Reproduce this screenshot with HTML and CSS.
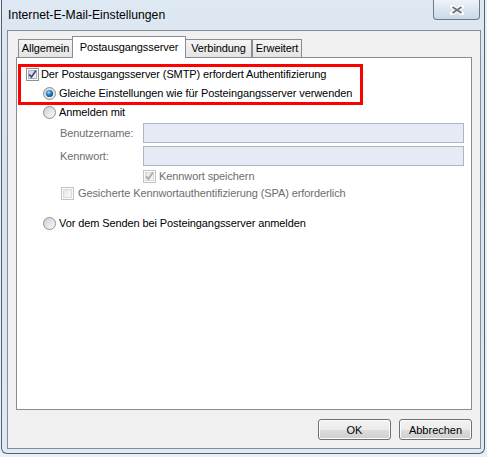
FILE: index.html
```html
<!DOCTYPE html>
<html lang="de">
<head>
    <meta charset="UTF-8">
    <title>Internet-E-Mail-Einstellungen</title>
    <link rel="stylesheet" href="styles.css">
</head>
<body>

    <!-- shared gradients for the checkboxes and radios -->
    <svg class="defs" width="0" height="0">
        <defs>
            <linearGradient id="boxFill" x1="0" y1="0" x2="1" y2="1">
                <stop offset="0" stop-color="#cbd0d6"/>
                <stop offset="1" stop-color="#f8f8f8"/>
            </linearGradient>
            <linearGradient id="boxOff" x1="0" y1="0" x2="1" y2="1">
                <stop offset="0" stop-color="#e6e6e6"/>
                <stop offset="1" stop-color="#f8f8f8"/>
            </linearGradient>
            <linearGradient id="radioFill" x1="0" y1="0" x2="1" y2="1">
                <stop offset="0" stop-color="#c9ced4"/>
                <stop offset="1" stop-color="#fbfbfb"/>
            </linearGradient>
            <radialGradient id="radioDot" cx="0.4" cy="0.35" r="0.7">
                <stop offset="0" stop-color="#9fdcff"/>
                <stop offset="0.45" stop-color="#2b8ad0"/>
                <stop offset="1" stop-color="#0f3f78"/>
            </radialGradient>
        </defs>
    </svg>

    <div class="window">
        <div class="titlebar">
            <span class="title">Internet-E-Mail-Einstellungen</span>
            <div class="close">
                <svg width="14" height="10" viewBox="0 0 14 10">
                    <path d="M2 1.5 L12 8.5 M12 1.5 L2 8.5" stroke="#fff" stroke-width="4" stroke-linecap="round"/>
                    <path d="M2.5 2 L11.5 8 M11.5 2 L2.5 8" stroke="#6f7378" stroke-width="2"/>
                </svg>
            </div>
        </div>

        <div class="dialog">
            <div class="tabs">
                <div class="tab tab-first">Allgemein</div>
                <div class="tab active">Postausgangsserver</div>
                <div class="tab tab-third">Verbindung</div>
                <div class="tab tab-last">Erweitert</div>
            </div>

            <div class="panel">
                <div class="highlight">
                    <div class="row row-auth">
                        <svg class="ctl" width="13" height="13" viewBox="0 0 13 13">
                            <rect x="0.5" y="0.5" width="12" height="12" fill="#fdfdfd" stroke="#8e8f8f"/>
                            <rect x="2.5" y="2.5" width="8" height="8" fill="url(#boxFill)" stroke="#aeb3b9"/>
                            <path d="M3.2 6.4 L5.4 9 L10 2.6" fill="none" stroke="#3c4f8f" stroke-width="1.7"/>
                        </svg>
                        <span>Der Postausgangsserver (SMTP) erfordert Authentifizierung</span>
                    </div>
                    <div class="row row-same">
                        <svg class="ctl" width="13" height="13" viewBox="0 0 13 13">
                            <circle cx="6.5" cy="6.5" r="6" fill="url(#radioFill)" stroke="#8e8f8f"/>
                            <circle cx="6.5" cy="6.5" r="3.6" fill="url(#radioDot)"/>
                        </svg>
                        <span>Gleiche Einstellungen wie für Posteingangsserver verwenden</span>
                    </div>
                </div>

                <div class="row row-login">
                    <svg class="ctl" width="13" height="13" viewBox="0 0 13 13">
                        <circle cx="6.5" cy="6.5" r="6" fill="url(#radioFill)" stroke="#8e8f8f"/>
                    </svg>
                    <span>Anmelden mit</span>
                </div>

                <div class="field field-user">
                    <span class="field-label">Benutzername:</span>
                    <div class="input"></div>
                </div>
                <div class="field field-pass">
                    <span class="field-label">Kennwort:</span>
                    <div class="input"></div>
                </div>

                <div class="row row-save disabled">
                    <svg class="ctl" width="13" height="13" viewBox="0 0 13 13">
                        <rect x="0.5" y="0.5" width="12" height="12" fill="#fbfbfb" stroke="#c3c3c3"/>
                        <rect x="2.5" y="2.5" width="8" height="8" fill="url(#boxOff)" stroke="#dadada"/>
                        <path d="M3.2 6.4 L5.4 9 L10 2.6" fill="none" stroke="#a9a9a9" stroke-width="1.7"/>
                    </svg>
                    <span>Kennwort speichern</span>
                </div>
                <div class="row row-spa disabled">
                    <svg class="ctl" width="13" height="13" viewBox="0 0 13 13">
                        <rect x="0.5" y="0.5" width="12" height="12" fill="#fbfbfb" stroke="#c3c3c3"/>
                        <rect x="2.5" y="2.5" width="8" height="8" fill="url(#boxOff)" stroke="#dadada"/>
                    </svg>
                    <span>Gesicherte Kennwortauthentifizierung (SPA) erforderlich</span>
                </div>

                <div class="row row-before">
                    <svg class="ctl" width="13" height="13" viewBox="0 0 13 13">
                        <circle cx="6.5" cy="6.5" r="6" fill="url(#radioFill)" stroke="#8e8f8f"/>
                    </svg>
                    <span>Vor dem Senden bei Posteingangsserver anmelden</span>
                </div>
            </div>

            <div class="buttons">
                <button class="btn">OK</button>
                <button class="btn">Abbrechen</button>
            </div>
        </div>
    </div>

</body>
</html>
```

FILE: styles.css
```css
* {
    margin: 0;
    padding: 0;
    box-sizing: border-box;
}

body {
    font-family: "Liberation Sans", Arial, sans-serif;
    font-size: 11px;
    letter-spacing: -0.1px;
    color: #000;
    background-color: #e9eff6;
    width: 487px;
    height: 457px;
    overflow: hidden;
}

.defs {
    position: absolute;
}

/* window frame */
.window {
    margin-left: 1px;
    width: 484px;
    height: 454px;
    border: 1px solid #56606b;
    border-top: none;
    border-radius: 0 0 6px 6px;
    background: linear-gradient(to bottom, #dde8f3, #d6e2ee 40%, #e0e9f3);
}

.titlebar {
    height: 30px;
    display: flex;
    justify-content: space-between;
    align-items: flex-start;
}

.title {
    font-size: 12.2px;
    letter-spacing: 0;
    line-height: 30px;
    padding-left: 6px;
}

.close {
    width: 47px;
    height: 20px;
    margin-right: 4px;
    border: 1px solid #6b7a8c;
    border-top: none;
    border-radius: 0 0 4px 4px;
    background: linear-gradient(to bottom, #eef3f9, #dbe5ef 50%, #ccd9e6);
    display: flex;
    justify-content: center;
    align-items: center;
}

/* dialog client area */
.dialog {
    margin: 0 3px 0 5px;
    height: 419px;
    border: 1px solid #818d99;
    background-color: #f0f0f0;
    padding: 5px 8px 8px 8px;
}

.tabs {
    display: flex;
    align-items: flex-end;
    height: 21px;
    padding-left: 2px;
}

.tab {
    height: 18px;
    border: 1px solid #898c95;
    border-bottom: none;
    background: linear-gradient(to bottom, #f4f4f4, #e4e4e4);
    text-align: center;
    line-height: 17px;
}

.tab-first {
    width: 54px;
    border-right: none;
}

.tab.active {
    position: relative;
    z-index: 1;
    width: 114px;
    height: 22px;
    margin-bottom: -1px;
    background: #fff;
    line-height: 20px;
}

.tab-third {
    width: 66px;
    border-left: none;
}

.tab-last {
    width: 50px;
    border-left: 1px solid #898c95;
}

.panel {
    height: 353px;
    border: 1px solid #898c95;
    background-color: #fff;
    padding-top: 6px;
}

.highlight {
    margin-left: 1px;
    width: 345px;
    height: 41px;
    border: 3px solid #ff0000;
    padding: 1px 0 0 5px;
}

.row {
    display: flex;
    align-items: center;
    height: 13px;
    line-height: 13px;
    white-space: nowrap;
}

.row .ctl {
    flex: none;
    margin-right: 3px;
}

.row-auth .ctl {
    margin-right: 2px;
}

.row-same {
    margin-top: 6px;
    margin-left: 17px;
}

.row-login {
    margin-top: 1px;
    margin-left: 26px;
}

.row-save {
    margin-top: 4px;
    margin-left: 126px;
}

.row-spa {
    margin-top: 4px;
    margin-left: 44px;
}

.row-spa .ctl {
    margin-right: 4px;
}

.row-before {
    margin-top: 17px;
    margin-left: 26px;
}

.disabled {
    color: #6d6d6d;
}

.field {
    display: flex;
    align-items: center;
    margin-left: 43px;
    height: 20px;
}

.field-user {
    margin-top: 4px;
}

.field-pass {
    margin-top: 3px;
}

.field-label {
    width: 83px;
    color: #6d6d6d;
}

.input {
    width: 321px;
    height: 20px;
    border: 1px solid #abb6c7;
    background-color: #e5eaf4;
}

.buttons {
    display: flex;
    justify-content: flex-end;
    gap: 8px;
    margin-top: 9px;
}

.btn {
    width: 73px;
    height: 21px;
    font-family: inherit;
    font-size: 11px;
    color: #000;
    border: 1px solid #707070;
    border-radius: 3px;
    box-shadow: inset 0 0 0 1px #fcfcfc;
    background: linear-gradient(to bottom, #f2f2f2, #ebebeb 50%, #dddddd 51%, #cfcfcf);
}
```
